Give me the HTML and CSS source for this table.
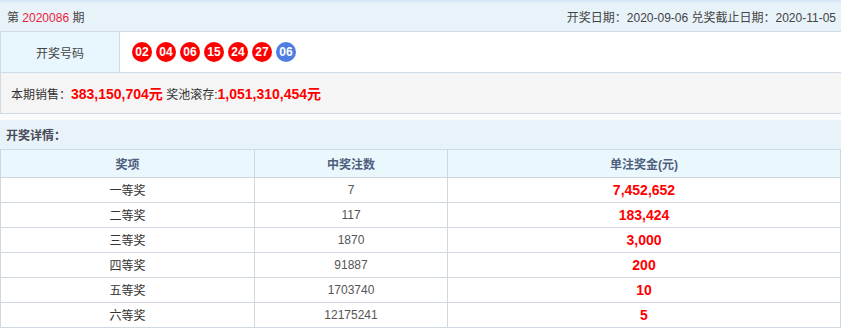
FILE: index.html
```html
<!DOCTYPE html>
<html lang="zh">
<head>
<meta charset="utf-8">
<link rel="stylesheet" href="styles.css">
</head>
<body>
<div class="wrap">
  <div class="topbar">
    <div>第 <span class="issue">2020086</span> 期</div>
    <div>开奖日期：2020-09-06 兑奖截止日期：2020-11-05</div>
  </div>
  <div class="numrow">
    <div class="numlabel">开奖号码</div>
    <div class="balls">
      <span class="ball">02</span><span class="ball">04</span><span class="ball">06</span><span class="ball">15</span><span class="ball">24</span><span class="ball">27</span><span class="ball blue">06</span>
    </div>
  </div>
  <div class="sales"><span>本期销售：<b class="money">383,150,704元</b> 奖池滚存:<b class="money">1,051,310,454元</b></span></div>
  <div class="gap"></div>
  <div class="dethead">开奖详情：</div>
  <table class="prizes">
    <colgroup><col class="c1"><col class="c2"><col class="c3"></colgroup>
    <thead>
      <tr><th>奖项</th><th>中奖注数</th><th>单注奖金(元)</th></tr>
    </thead>
    <tbody>
      <tr><td>一等奖</td><td class="cnt">7</td><td class="amt">7,452,652</td></tr>
      <tr><td>二等奖</td><td class="cnt">117</td><td class="amt">183,424</td></tr>
      <tr><td>三等奖</td><td class="cnt">1870</td><td class="amt">3,000</td></tr>
      <tr><td>四等奖</td><td class="cnt">91887</td><td class="amt">200</td></tr>
      <tr><td>五等奖</td><td class="cnt">1703740</td><td class="amt">10</td></tr>
      <tr><td>六等奖</td><td class="cnt">12175241</td><td class="amt">5</td></tr>
    </tbody>
  </table>
</div>
</body>
</html>
```
FILE: styles.css
```css
* { box-sizing: border-box; }
body {
  margin: 0;
  background: #fff;
  font-family: "Liberation Sans", Arial, "Noto Sans CJK SC", sans-serif;
  font-size: 12px;
  color: #333;
}
.wrap { width: 841px; }
.topbar {
  height: 32px;
  border-top: 2px solid #d6e7f5;
  border-bottom: 1px solid #cfdbe6;
  background: #e8f2f9;
  display: flex;
  justify-content: space-between;
  align-items: center;
  padding: 0 5px 0 7px;
  color: #444;
}
.issue { color: #ee1c3a; }
.numrow {
  display: flex;
  height: 41px;
  border-bottom: 1px solid #cfdbe6;
  border-left: 1px solid #cfdbe6;
}
.numlabel {
  width: 119px;
  background: #e8f7fe;
  border-right: 1px solid #cfdbe6;
  display: flex;
  align-items: center;
  justify-content: center;
  color: #444;
}
.balls {
  display: flex;
  align-items: center;
  gap: 4px;
  padding-left: 12px;
}
.ball {
  width: 20px;
  height: 20px;
  border-radius: 50%;
  background: #f00;
  color: #fff;
  font-weight: bold;
  font-size: 12px;
  display: flex;
  align-items: center;
  justify-content: center;
}
.ball.blue { background: #4f7ee0; }
.sales {
  height: 41px;
  background: #f5f5f5;
  border-left: 1px solid #cfdbe6;
  border-bottom: 1px solid #cfdbe6;
  display: flex;
  align-items: center;
  padding-left: 10px;
  color: #333;
}
.money { color: #f00; font-size: 14px; }
.gap { height: 6px; background: #f9fbfd; }
.dethead {
  height: 30px;
  background: #e8f2f9;
  border-bottom: 1px solid #cfdbe6;
  display: flex;
  align-items: center;
  padding-left: 6px;
  font-weight: bold;
  color: #4a4a58;
}
.prizes {
  width: 841px;
  border-collapse: collapse;
  table-layout: fixed;
}
.c1 { width: 254px; }
.c2 { width: 193px; }
.prizes th, .prizes td {
  border: 1px solid #cfd8e0;
  border-top: 0;
  text-align: center;
  padding: 0;
}
.prizes th {
  height: 27px;
  background: #eaf8fe;
  font-weight: bold;
  color: #4f5f7d;
}
.prizes td { height: 25px; color: #333; }
.prizes td.cnt { color: #555; }
.prizes td.amt { color: #f00; font-weight: bold; font-size: 14px; }
```
